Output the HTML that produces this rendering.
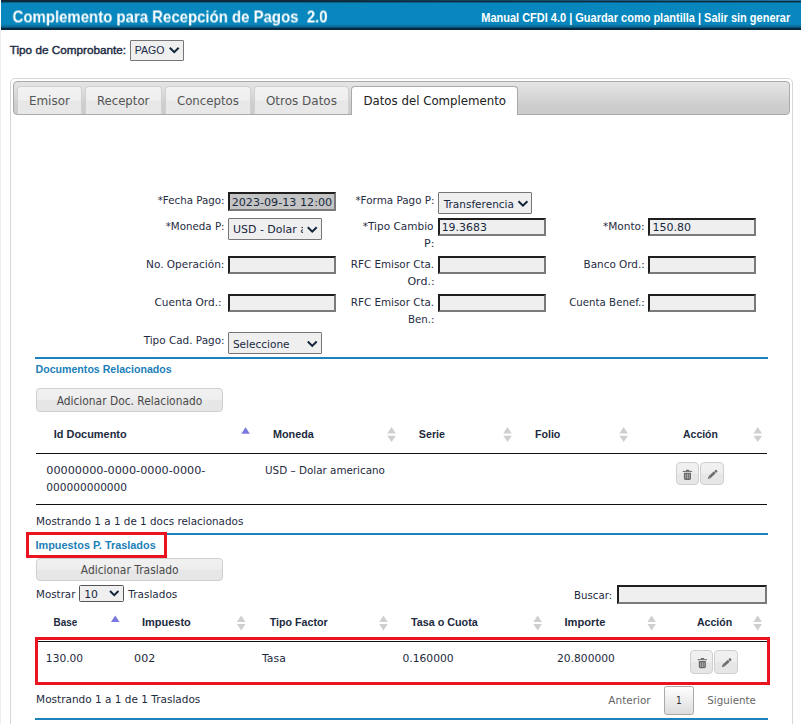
<!DOCTYPE html>
<html lang="es"><head><meta charset="utf-8"><title>Complemento para Recepción de Pagos 2.0</title>
<style>
html,body{margin:0;padding:0;background:#fff;}
body{position:relative;width:801px;height:724px;overflow:hidden;font-family:"DejaVu Sans","Liberation Sans",sans-serif;}
.a{position:absolute;box-sizing:border-box;}
.t{position:absolute;margin:0;padding:0;border:0;background:none;white-space:pre;line-height:1;transform-origin:0 0;text-decoration:none;font-weight:normal;display:block;}
.s{font-family:"Liberation Sans",sans-serif;}
.d{font-family:"DejaVu Sans","Liberation Sans",sans-serif;}
.c{font-family:"DejaVu Sans Condensed","DejaVu Sans","Liberation Sans",sans-serif;}
.b{font-weight:bold;}
#hdr{left:1px;top:0;width:800px;height:30px;background:linear-gradient(to bottom,#0e2a3d 0,#0e2a3d 2px,#0c5f86 2.5px,#0787bd 3.5px,#0787bd 24px,#0a6e9c 26.5px,#0a4f74 27.5px,#06283f 28.5px,#06283f 29.5px,#fff 30px);}
#edge{left:0;top:30px;width:1px;height:694px;background:#ececec;}
#box{left:10px;top:78px;width:783px;height:700px;border:1px solid #d6d6d6;border-radius:5px;background:#fff;}
#nav{left:13px;top:81px;width:777px;height:34px;border:1px solid #aaa;border-radius:4px;background:linear-gradient(to bottom,#e5e5e5 0,#d9d9d9 40%,#cecece 70%,#cbcbcb 100%);}
.tab{top:86px;height:28px;border:1px solid #d0d0d0;border-bottom:0;border-radius:4px 4px 0 0;background:linear-gradient(to bottom,#f2f2f2 0,#efefef 48%,#e7e7e7 52%,#e8e8e8 100%);}
.tab.on{height:29px;background:#fff;border-color:#aaa;}
.inp{border-style:solid;border-width:2px;border-color:#1f1f1f #7a7a7a #7a7a7a #1f1f1f;background:#efefef;}
.inp.ro{background:#c4c4c4;}
.sel{border:1px solid #767676;border-radius:1px;background:#efefef;}
.hr{height:2px;background:#1c82bb;left:35px;width:733px;}
.ln{height:1px;background:#111;left:36px;width:731px;}
.btn{border:1px solid #cfcfcf;border-radius:4px;background:linear-gradient(to bottom,#f1f1f1 0,#eeeeee 48%,#e7e7e7 52%,#e6e6e6 100%);}
.red{border:3px solid #e9141f;}
svg{position:absolute;overflow:visible;}
#hdrtop{left:300px;top:0;width:501px;height:1px;background:linear-gradient(to right,rgba(36,128,176,0) 0,rgba(36,128,176,.85) 100%);}

</style></head><body>
<div id="hdr" class="a"></div>
<div id="hdrtop" class="a"></div>
<div id="edge" class="a"></div>
<div id="box" class="a"></div>
<div id="nav" class="a"></div>
<div class="a tab" style="left:17px;width:64.5px"></div>
<div class="a tab" style="left:85.3px;width:76.3px"></div>
<div class="a tab" style="left:165.4px;width:85.2px"></div>
<div class="a tab" style="left:254.2px;width:94.6px"></div>
<div class="a tab on" style="left:351.4px;width:166.2px"></div>
<!-- tipo comprobante select -->
<div class="a sel" style="left:130px;top:40px;width:54px;height:21px"></div>
<!-- form controls -->
<div class="a inp ro" style="left:228px;top:192px;width:108px;height:18.8px"></div>
<div class="a sel" style="left:438px;top:192px;width:94px;height:21.5px"></div>
<div class="a sel" style="left:228px;top:218px;width:94px;height:21.5px"></div>
<div class="a inp" style="left:438px;top:218.3px;width:107.6px;height:18.2px"></div>
<div class="a inp" style="left:648px;top:218.3px;width:107.6px;height:18.2px"></div>
<div class="a inp" style="left:228px;top:256.3px;width:107.6px;height:18.2px"></div>
<div class="a inp" style="left:438px;top:256.3px;width:107.6px;height:18.2px"></div>
<div class="a inp" style="left:648px;top:256.3px;width:107.6px;height:18.2px"></div>
<div class="a inp" style="left:228px;top:294.2px;width:107.6px;height:18.2px"></div>
<div class="a inp" style="left:438px;top:294.2px;width:107.6px;height:18.2px"></div>
<div class="a inp" style="left:648px;top:294.2px;width:107.6px;height:18.2px"></div>
<div class="a sel" style="left:228px;top:332.4px;width:94px;height:21.5px"></div>
<!-- USD select clipped text -->
<div class="a" style="left:232px;top:221px;width:71.4px;height:17px;overflow:hidden"><span class="t d" id="usd" style="left:1.2px;top:4.3px;font-size:10.8px;color:#17283f;transform:scaleX(1.015)">USD - Dolar americano</span></div>
<!-- section lines -->
<div class="a hr" style="top:357px"></div>
<div class="a hr" style="top:533px"></div>
<div class="a hr" style="top:718px"></div>
<div class="a ln" style="top:453px"></div>
<div class="a ln" style="top:504px"></div>
<div class="a ln" style="top:641px"></div>
<!-- buttons -->
<div class="a btn" style="left:36.3px;top:388px;width:186.5px;height:23.6px"></div>
<div class="a btn" style="left:36.3px;top:558.4px;width:186.5px;height:22.4px"></div>
<div class="a btn" style="left:676.1px;top:462.1px;width:22.6px;height:22.6px"></div>
<div class="a btn" style="left:700.1px;top:462.1px;width:23.6px;height:22.6px"></div>
<div class="a btn" style="left:690.1px;top:650px;width:22.6px;height:23.6px"></div>
<div class="a btn" style="left:714.1px;top:650px;width:23.6px;height:23.6px"></div>
<!-- length select + search -->
<div class="a sel" style="left:79.2px;top:585px;width:44.8px;height:17px;border-radius:1.5px;border-color:#555"></div>
<div class="a inp" style="left:617px;top:585.3px;width:149.6px;height:18.4px"></div>
<!-- pager -->
<div class="a" style="left:664.3px;top:686px;width:29.3px;height:29px;border:1px solid #a9a9a9;border-radius:2.5px;background:linear-gradient(to bottom,#ffffff 0,#dcdcdc 100%)"></div>
<!-- red highlight boxes -->
<div class="a red" style="left:26px;top:532px;width:141px;height:26px"></div>
<div class="a red" style="left:35px;top:637px;width:735px;height:48px"></div>
<!-- icons -->
<svg width="801" height="724" viewBox="0 0 801 724" style="left:0;top:0">
<defs>
<g id="chev"><path d="M0 0 L4.45 4.4 L8.9 0" fill="none" stroke="#10243a" stroke-width="2"/></g>
<g id="up"><path d="M0 6.6 L4.25 0 L8.5 6.6 Z"/></g>
<g id="dn"><path d="M0 0 L4.25 6.4 L8.5 0 Z"/></g>
<g id="both" fill="#cfcfcf"><use href="#up"/><use href="#dn" y="8.7"/></g>
<g id="trash" fill="#6a6a6a"><rect x="0" y="1.1" width="9.4" height="1"/><rect x="3.2" y="0" width="3.4" height="1.3" rx=".5"/><path d="M1.2 3 H8.3 V8.7 Q8.3 10.1 6.9 10.1 H2.6 Q1.2 10.1 1.2 8.7 Z"/><rect x="2.7" y="4.1" width=".8" height="4.8" fill="#b4b4b4"/><rect x="4.4" y="4.1" width=".8" height="4.8" fill="#b4b4b4"/><rect x="6.1" y="4.1" width=".8" height="4.8" fill="#b4b4b4"/></g>
<g id="pen" fill="#6e6e6e" transform="translate(.3 9.1) rotate(-42.7)"><path d="M0 0 L2.5 -1.35 L2.5 1.35 Z"/><rect x="2.5" y="-1.35" width="7.2" height="2.7"/><rect x="10.2" y="-1.35" width="2.3" height="2.7" rx=".7"/></g>
</defs>
<use href="#chev" x="169.8" y="47.8"/>
<use href="#chev" x="518.5" y="201.3"/>
<use href="#chev" x="307.8" y="227.2"/>
<use href="#chev" x="307.8" y="341.5"/>
<use href="#chev" x="110" y="591" transform="translate(110 591) scale(.95) translate(-110 -591)"/>
<g fill="#7878de"><use href="#up" x="241.3" y="427.2"/><use href="#up" x="111" y="615.5"/></g>
<use href="#both" x="387.3" y="427"/>
<use href="#both" x="503.3" y="427"/>
<use href="#both" x="619.4" y="427"/>
<use href="#both" x="753.5" y="427"/>
<use href="#both" x="237" y="615.4"/>
<use href="#both" x="379.2" y="615.4"/>
<use href="#both" x="533.4" y="615.4"/>
<use href="#both" x="647.4" y="615.4"/>
<use href="#both" x="753.4" y="615.4"/>
<use href="#trash" x="682.7" y="469.8"/>
<use href="#pen" x="707.4" y="469.8"/>
<use href="#trash" x="697.6" y="658.1"/>
<use href="#pen" x="721.4" y="658.2"/>
</svg>

<!-- text -->
<h1 class="t s b" style="left:0;top:0;font-size:17.3px;color:#fff;transform:translate(12.53px,8.50px) scaleX(0.8656);will-change:transform">Complemento para Recepción de Pagos  2.0</h1>
<nav class="t s b" style="left:0;top:0;font-size:12px;color:#fff;transform:translate(481.27px,11.50px) scaleX(0.9153)">Manual CFDI 4.0 | Guardar como plantilla | Salir sin generar</nav>
<label class="t s" style="left:0;top:0;font-size:11.3px;color:#1b2a42;transform:translate(9.74px,44.90px) scaleX(1.0383);-webkit-text-stroke:.4px #1b2a42">Tipo de Comprobante:</label>
<span class="t s" style="left:0;top:0;font-size:10.9px;color:#182a48;transform:translate(134.78px,44.70px) scaleX(0.9678)">PAGO</span>
<a class="t d" style="left:0;top:0;font-size:13px;color:#555;transform:translate(28.88px,94.00px) scaleX(0.9199)">Emisor</a>
<a class="t d" style="left:0;top:0;font-size:13px;color:#555;transform:translate(96.90px,94.00px) scaleX(0.9008)">Receptor</a>
<a class="t d" style="left:0;top:0;font-size:13px;color:#555;transform:translate(176.95px,94.00px) scaleX(0.9048)">Conceptos</a>
<a class="t d" style="left:0;top:0;font-size:13px;color:#555;transform:translate(265.94px,94.00px) scaleX(0.9213)">Otros Datos</a>
<a class="t d" style="left:0;top:0;font-size:13px;color:#212121;transform:translate(363.40px,94.00px) scaleX(0.9063)">Datos del Complemento</a>
<label class="t d" style="left:0;top:0;font-size:10.6px;color:#1f2c42;transform:translate(157.71px,194.70px) scaleX(0.9705)">*Fecha Pago:</label>
<label class="t d" style="left:0;top:0;font-size:10.6px;color:#1f2c42;transform:translate(355.41px,194.70px) scaleX(0.9803)">*Forma Pago P:</label>
<label class="t d" style="left:0;top:0;font-size:10.6px;color:#1f2c42;transform:translate(165.71px,220.80px) scaleX(0.9699)">*Moneda P:</label>
<label class="t d" style="left:0;top:0;font-size:10.6px;color:#1f2c42;transform:translate(362.70px,220.80px) scaleX(0.9930)">*Tipo Cambio</label>
<label class="t d" style="left:0;top:0;font-size:10.6px;color:#1f2c42;transform:translate(424.05px,237.60px) scaleX(1.0455)">P:</label>
<label class="t d" style="left:0;top:0;font-size:10.6px;color:#1f2c42;transform:translate(602.90px,220.80px) scaleX(0.9970)">*Monto:</label>
<label class="t d" style="left:0;top:0;font-size:10.6px;color:#1f2c42;transform:translate(146.01px,258.80px) scaleX(0.9935)">No. Operación:</label>
<label class="t d" style="left:0;top:0;font-size:10.6px;color:#1f2c42;transform:translate(350.82px,258.80px) scaleX(0.9760)">RFC Emisor Cta.</label>
<label class="t d" style="left:0;top:0;font-size:10.6px;color:#1f2c42;transform:translate(407.43px,275.60px) scaleX(1.0410)">Ord.:</label>
<label class="t d" style="left:0;top:0;font-size:10.6px;color:#1f2c42;transform:translate(583.52px,258.80px) scaleX(0.9832)">Banco Ord.:</label>
<label class="t d" style="left:0;top:0;font-size:10.6px;color:#1f2c42;transform:translate(154.45px,296.80px) scaleX(0.9945)">Cuenta Ord.:</label>
<label class="t d" style="left:0;top:0;font-size:10.6px;color:#1f2c42;transform:translate(350.82px,296.80px) scaleX(0.9760)">RFC Emisor Cta.</label>
<label class="t d" style="left:0;top:0;font-size:10.6px;color:#1f2c42;transform:translate(408.03px,313.60px) scaleX(0.9676)">Ben.:</label>
<label class="t d" style="left:0;top:0;font-size:10.6px;color:#1f2c42;transform:translate(569.17px,296.80px) scaleX(0.9659)">Cuenta Benef.:</label>
<label class="t d" style="left:0;top:0;font-size:10.6px;color:#1f2c42;transform:translate(143.65px,334.90px) scaleX(0.9848)">Tipo Cad. Pago:</label>
<span class="t d" style="left:0;top:0;font-size:10.8px;color:#17283f;transform:translate(231.63px,197.90px) scaleX(1.0326)">2023-09-13 12:00</span>
<span class="t d" style="left:0;top:0;font-size:10.8px;color:#17283f;transform:translate(441.64px,223.20px) scaleX(1.0121)">19.3683</span>
<span class="t d" style="left:0;top:0;font-size:10.8px;color:#17283f;transform:translate(652.43px,223.20px) scaleX(1.0206)">150.80</span>
<span class="t d" style="left:0;top:0;font-size:10.8px;color:#17283f;transform:translate(443.65px,199.50px) scaleX(0.9733)">Transferencia</span>
<span class="t d" style="left:0;top:0;font-size:10.8px;color:#17283f;transform:translate(232.92px,339.80px) scaleX(0.9742)">Seleccione</span>
<h3 class="t s b" style="left:0;top:0;font-size:11.3px;color:#1c7fb9;transform:translate(35.50px,364.10px) scaleX(0.9393)">Documentos Relacionados</h3>
<button class="t d" style="left:0;top:0;font-size:11.6px;color:#4a4a4a;transform:translate(56.65px,395.50px) scaleX(0.9199)">Adicionar Doc. Relacionado</button>
<span class="t s b" style="left:0;top:0;font-size:11.3px;color:#1c2a40;transform:translate(53.77px,428.90px) scaleX(0.9682)">Id Documento</span>
<span class="t s b" style="left:0;top:0;font-size:11.3px;color:#1c2a40;transform:translate(272.98px,428.90px) scaleX(0.9559)">Moneda</span>
<span class="t s b" style="left:0;top:0;font-size:11.3px;color:#1c2a40;transform:translate(418.82px,428.90px) scaleX(0.9460)">Serie</span>
<span class="t s b" style="left:0;top:0;font-size:11.3px;color:#1c2a40;transform:translate(534.89px,428.90px) scaleX(0.9446)">Folio</span>
<span class="t s b" style="left:0;top:0;font-size:11.3px;color:#1c2a40;transform:translate(683.07px,428.90px) scaleX(0.9220)">Acción</span>
<span class="t d" style="left:0;top:0;font-size:10.8px;color:#1e2a3e;transform:translate(46.27px,465.90px) scaleX(1.0403)">00000000-0000-0000-0000-</span>
<span class="t d" style="left:0;top:0;font-size:10.8px;color:#1e2a3e;transform:translate(46.31px,483.00px) scaleX(0.9794)">000000000000</span>
<span class="t d" style="left:0;top:0;font-size:10.8px;color:#1e2a3e;transform:translate(265.04px,465.80px) scaleX(0.9594)">USD – Dolar americano</span>
<div class="t d" style="left:0;top:0;font-size:10.8px;color:#1e2a3e;transform:translate(36.09px,516.50px) scaleX(0.9618)">Mostrando 1 a 1 de 1 docs relacionados</div>
<h3 class="t s b" style="left:0;top:0;font-size:11.3px;color:#1c7fb9;transform:translate(35.48px,539.90px) scaleX(0.9640)">Impuestos P. Traslados</h3>
<button class="t d" style="left:0;top:0;font-size:11.6px;color:#4a4a4a;transform:translate(80.75px,564.50px) scaleX(0.9238)">Adicionar Traslado</button>
<label class="t d" style="left:0;top:0;font-size:10.8px;color:#1e2a3e;transform:translate(36.10px,590.00px) scaleX(0.9518)">Mostrar</label>
<span class="t d" style="left:0;top:0;font-size:10.4px;color:#17283f;transform:translate(84.26px,589.00px) scaleX(1.0377)">10</span>
<label class="t d" style="left:0;top:0;font-size:10.8px;color:#1e2a3e;transform:translate(128.35px,590.00px) scaleX(0.9717)">Traslados</label>
<label class="t d" style="left:0;top:0;font-size:10.8px;color:#1e2a3e;transform:translate(574.11px,590.90px) scaleX(0.9438)">Buscar:</label>
<span class="t s b" style="left:0;top:0;font-size:11.3px;color:#1c2a40;transform:translate(53.44px,617.30px) scaleX(0.8810)">Base</span>
<span class="t s b" style="left:0;top:0;font-size:11.3px;color:#1c2a40;transform:translate(141.97px,617.30px) scaleX(0.9722)">Impuesto</span>
<span class="t s b" style="left:0;top:0;font-size:11.3px;color:#1c2a40;transform:translate(269.71px,617.30px) scaleX(0.9449)">Tipo Factor</span>
<span class="t s b" style="left:0;top:0;font-size:11.3px;color:#1c2a40;transform:translate(410.90px,617.30px) scaleX(0.9542)">Tasa o Cuota</span>
<span class="t s b" style="left:0;top:0;font-size:11.3px;color:#1c2a40;transform:translate(564.46px,617.30px) scaleX(0.9875)">Importe</span>
<span class="t s b" style="left:0;top:0;font-size:11.3px;color:#1c2a40;transform:translate(696.97px,617.30px) scaleX(0.9328)">Acción</span>
<span class="t d" style="left:0;top:0;font-size:10.8px;color:#1e2a3e;transform:translate(45.87px,653.70px) scaleX(0.9844)">130.00</span>
<span class="t d" style="left:0;top:0;font-size:10.8px;color:#1e2a3e;transform:translate(134.08px,653.70px) scaleX(1.0298)">002</span>
<span class="t d" style="left:0;top:0;font-size:10.8px;color:#1e2a3e;transform:translate(262.05px,653.70px) scaleX(1.0020)">Tasa</span>
<span class="t d" style="left:0;top:0;font-size:10.8px;color:#1e2a3e;transform:translate(402.40px,653.70px) scaleX(0.9948)">0.160000</span>
<span class="t d" style="left:0;top:0;font-size:10.8px;color:#1e2a3e;transform:translate(557.06px,653.70px) scaleX(0.9900)">20.800000</span>
<div class="t d" style="left:0;top:0;font-size:10.8px;color:#1e2a3e;transform:translate(36.08px,694.80px) scaleX(0.9727)">Mostrando 1 a 1 de 1 Traslados</div>
<a class="t d" style="left:0;top:0;font-size:10.8px;color:#666;transform:translate(608.35px,695.80px) scaleX(0.9689)">Anterior</a>
<a class="t d" style="left:0;top:0;font-size:10.8px;color:#333;transform:translate(676.03px,695.80px) scaleX(0.8414)">1</a>
<a class="t d" style="left:0;top:0;font-size:10.8px;color:#666;transform:translate(707.33px,695.80px) scaleX(0.9542)">Siguiente</a>
</body></html>
